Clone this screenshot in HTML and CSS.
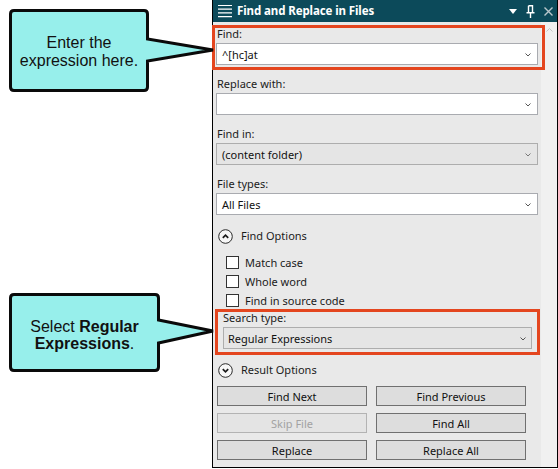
FILE: index.html
```html
<!DOCTYPE html>
<html>
<head>
<meta charset="utf-8">
<link rel="stylesheet" href="styles.css">
</head>
<body>
<div class="stage">
  <div class="notes">
    <svg class="bubbles" width="230" height="469" viewBox="0 0 230 469">
      <path class="bubble" d="M14 10.5 H144 Q147.5 10.5 147.5 14 V39 L213 50 L147.5 61 V87 Q147.5 90.5 144 90.5 H14 Q10.5 90.5 10.5 87 V14 Q10.5 10.5 14 10.5 Z"/>
      <path class="bubble" d="M14 294.5 H155 Q158.5 294.5 158.5 298 V320 L213 331 L158.5 343 V367 Q158.5 370.5 155 370.5 H14 Q10.5 370.5 10.5 367 V298 Q10.5 294.5 14 294.5 Z"/>
    </svg>
    <div class="note note-enter">Enter the<br>expression here.</div>
    <div class="note note-select">Select <b>Regular</b><br><b>Expressions</b>.</div>
  </div>

  <div class="panel">
    <div class="titlebar">
      <svg class="menu-icon" width="14" height="14" viewBox="0 0 14 14">
        <path d="M0 1.5H14M0 5.2H14M0 8.9H14M0 12.6H14" stroke="#fff" stroke-width="1.2"/>
      </svg>
      <span class="title">Find and Replace in Files</span>
      <div class="title-tools">
        <svg width="8" height="5" viewBox="0 0 8 5"><path d="M0 0H8L4 5Z" fill="#fff"/></svg>
        <svg width="9" height="13" viewBox="0 0 9 13"><path d="M2.5 0.8H6.5V7.5M2.5 0.8V7.5M0.5 7.8H8.5M4.5 8V13" stroke="#fff" stroke-width="1.4" fill="none"/></svg>
        <svg width="9" height="9" viewBox="0 0 9 9"><path d="M0.5 0.5L8.5 8.5M8.5 0.5L0.5 8.5" stroke="#b9c7cc" stroke-width="1.4"/></svg>
      </div>
    </div>

    <div class="panel-body">
      <div class="content">
        <div class="field">
          <div class="label">Find:</div>
          <div class="combo"><span class="value">^[hc]at</span><svg class="chev" width="6" height="4" viewBox="0 0 6 4"><path d="M0.5 0.5L3 3L5.5 0.5" stroke="#555" fill="none"/></svg></div>
        </div>
        <div class="field">
          <div class="label">Replace with:</div>
          <div class="combo"><span class="value"></span><svg class="chev" width="6" height="4" viewBox="0 0 6 4"><path d="M0.5 0.5L3 3L5.5 0.5" stroke="#555" fill="none"/></svg></div>
        </div>
        <div class="field">
          <div class="label">Find in:</div>
          <div class="combo combo-gray"><span class="value">(content folder)</span><svg class="chev" width="6" height="4" viewBox="0 0 6 4"><path d="M0.5 0.5L3 3L5.5 0.5" stroke="#777" fill="none"/></svg></div>
        </div>
        <div class="field">
          <div class="label">File types:</div>
          <div class="combo"><span class="value">All Files</span><svg class="chev" width="6" height="4" viewBox="0 0 6 4"><path d="M0.5 0.5L3 3L5.5 0.5" stroke="#555" fill="none"/></svg></div>
        </div>

        <div class="toggle toggle-find">
          <svg width="15" height="15" viewBox="0 0 15 15"><circle cx="7.5" cy="7.5" r="6.8" fill="#f7f7f7" stroke="#2a2a2a" stroke-width="1"/><path d="M4.8 8.8L7.5 6.1L10.2 8.8" stroke="#1a1a1a" stroke-width="1.7" fill="none"/></svg>
          <span>Find Options</span>
        </div>

        <div class="options">
          <div class="check"><span class="box"></span><span>Match case</span></div>
          <div class="check"><span class="box"></span><span>Whole word</span></div>
          <div class="check"><span class="box"></span><span>Find in source code</span></div>
          <div class="field field-search">
            <div class="label">Search type:</div>
            <div class="combo combo-gray combo-search"><span class="value">Regular Expressions</span><svg class="chev" width="6" height="4" viewBox="0 0 6 4"><path d="M0.5 0.5L3 3L5.5 0.5" stroke="#555" fill="none"/></svg></div>
          </div>
        </div>

        <div class="toggle toggle-result">
          <svg width="15" height="15" viewBox="0 0 15 15"><circle cx="7.5" cy="7.5" r="6.8" fill="#f7f7f7" stroke="#2a2a2a" stroke-width="1"/><path d="M4.8 6.2L7.5 8.9L10.2 6.2" stroke="#1a1a1a" stroke-width="1.7" fill="none"/></svg>
          <span>Result Options</span>
        </div>

        <div class="buttons">
          <div class="btn">Find Next</div>
          <div class="btn">Find Previous</div>
          <div class="btn btn-disabled">Skip File</div>
          <div class="btn">Find All</div>
          <div class="btn">Replace</div>
          <div class="btn">Replace All</div>
        </div>
      </div>
      <div class="scrollbar">
        <svg width="7" height="4" viewBox="0 0 7 4"><path d="M0.5 3.5L3.5 0.5L6.5 3.5" stroke="#c4c4c4" fill="none"/></svg>
      </div>
    </div>

    <div class="highlight highlight-find"></div>
    <div class="highlight highlight-search"></div>
  </div>
</div>
</body>
</html>
```

FILE: styles.css
```css
html, body {
  margin: 0;
  padding: 0;
}

body {
  width: 558px;
  height: 469px;
  overflow: hidden;
  background: #ffffff;
  font-family: "Noto Sans", "Open Sans", sans-serif;
  font-size: 11px;
  color: #1b1b1b;
}

.stage {
  display: flex;
  width: 558px;
  height: 469px;
}

/* ---------- callouts ---------- */
.notes {
  position: relative;
  width: 212px;
  flex: none;
}

.bubbles {
  position: absolute;
  left: 0;
  top: 0;
  z-index: 3;
  overflow: visible;
}

.bubble {
  fill: #97efeb;
  stroke: #0a0a0a;
  stroke-width: 3;
  stroke-linejoin: miter;
}

.note {
  position: absolute;
  z-index: 4;
  font-family: "Liberation Sans", Arial, sans-serif;
  font-size: 16px;
  color: #111;
  text-align: center;
  line-height: 18px;
  white-space: nowrap;
}

.note-enter {
  left: 9px;
  width: 140px;
  top: 33.5px;
}

.note-select {
  left: 9px;
  width: 151px;
  top: 317.5px;
  line-height: 17px;
}

/* ---------- panel ---------- */
.panel {
  position: relative;
  width: 344px;
  height: 467px;
  border: 1px solid #000;
  border-top: none;
  display: flex;
  flex-direction: column;
  background: #e9e9e9;
}

.titlebar {
  height: 22px;
  flex: none;
  background: #0c4a5a;
  display: flex;
  align-items: center;
  padding: 0 4px 0 5px;
  color: #fff;
}

.menu-icon {
  flex: none;
}

.title {
  margin-left: 5px;
  font-weight: 700;
  font-size: 11.5px;
  letter-spacing: -0.1px;
  line-height: 22px;
}

.title-tools {
  margin-left: auto;
  display: flex;
  align-items: center;
  gap: 9px;
}

.title-tools svg:first-child {
  margin-top: 1px;
}

.panel-body {
  flex: 1;
  display: flex;
  min-height: 0;
}

.content {
  flex: 1;
  padding: 4px 3px 0 3px;
  display: flex;
  flex-direction: column;
}

.scrollbar {
  width: 16px;
  flex: none;
  background: #f0f0f0;
  display: flex;
  justify-content: center;
  padding-top: 6px;
  box-sizing: border-box;
  align-items: flex-start;
}

/* ---------- fields ---------- */
.field + .field {
  margin-top: 11px;
}

.label {
  height: 15px;
  line-height: 15px;
  padding-left: 1px;
  margin-bottom: 2px;
  white-space: nowrap;
}

.combo {
  box-sizing: border-box;
  height: 22px;
  border: 1px solid #a9abb0;
  background: #ffffff;
  display: flex;
  align-items: center;
  padding: 0 6px 0 5px;
  color: #111;
}

.combo .value {
  flex: 1;
  line-height: 15px;
  white-space: nowrap;
}

.combo-gray {
  background: #e5e5e5;
  border-color: #adadad;
}

.chev {
  flex: none;
  margin-top: 1px;
}

/* ---------- option toggles ---------- */
.toggle {
  display: flex;
  align-items: center;
  gap: 8px;
  height: 16px;
  line-height: 16px;
  padding-left: 2px;
}

.toggle-find {
  margin-top: 13px;
}

.toggle-result {
  margin-top: 13px;
}

.options {
  margin-top: 9px;
}

.check {
  display: flex;
  align-items: center;
  gap: 6px;
  height: 19px;
  padding-left: 10px;
  white-space: nowrap;
}

.box {
  box-sizing: border-box;
  width: 13px;
  height: 13px;
  border: 1px solid #333;
  background: #fff;
  flex: none;
}

.field-search {
  padding: 0 6px 0 7px;
}

.field-search .label {
  padding-left: 0;
}

.combo-search {
  padding-left: 4px;
  padding-right: 5px;
}

/* ---------- buttons ---------- */
.buttons {
  margin-top: 8px;
  margin-left: 1px;
  display: grid;
  grid-template-columns: 150px 150px;
  grid-auto-rows: 20px;
  column-gap: 9px;
  row-gap: 7px;
}

.btn {
  box-sizing: border-box;
  border: 1px solid #707070;
  background: #dddddd;
  display: flex;
  align-items: center;
  justify-content: center;
  color: #111;
  white-space: nowrap;
}

.btn-disabled {
  border-color: #b3b3b3;
  background: #e4e4e4;
  color: #a2a2a2;
}

/* ---------- annotation boxes ---------- */
.highlight {
  position: absolute;
  box-sizing: border-box;
  border: 3px solid #e4461f;
  z-index: 2;
  pointer-events: none;
}

.highlight-find {
  left: -1px;
  top: 25px;
  width: 333px;
  height: 45px;
}

.highlight-search {
  left: 2px;
  top: 309px;
  width: 325px;
  height: 46px;
}
```
